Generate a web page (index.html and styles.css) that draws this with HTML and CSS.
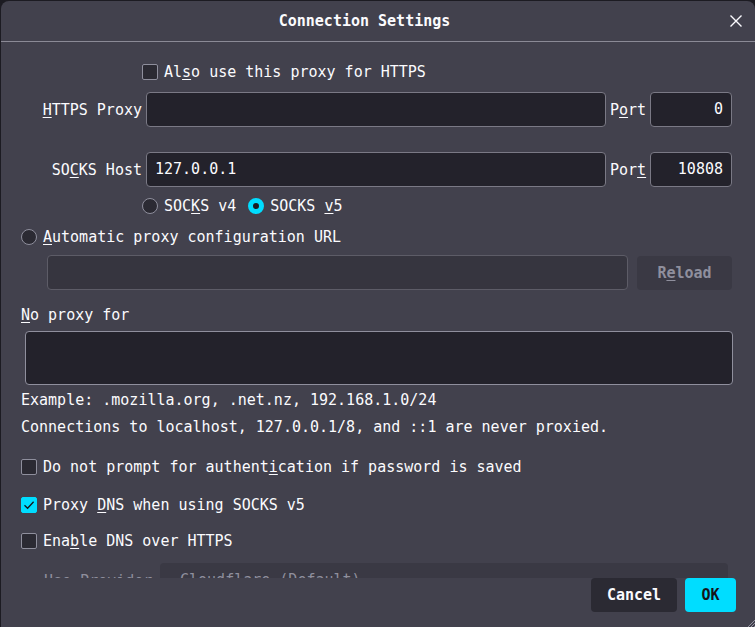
FILE: index.html
```html
<!DOCTYPE html>
<html>
<head>
<meta charset="utf-8">
<link rel="stylesheet" href="styles.css">
</head>
<body>
<div class="dialog">
  <div class="header">
    <span class="title">Connection Settings</span>
    <svg class="close" width="14" height="14" viewBox="0 0 14 14"><path d="M1.5 1.5 L12.5 12.5 M12.5 1.5 L1.5 12.5" stroke="#fbfbfe" stroke-width="1.4" fill="none"/></svg>
  </div>
  <div class="content">
    <div class="row-check indent r-also"><span class="box"></span><span>Al<u>s</u>o use this proxy for HTTPS</span></div>
    <div class="field-row r-https">
      <label class="lbl"><u>H</u>TTPS Proxy</label>
      <div class="input wide"></div>
      <label class="port">P<u>o</u>rt</label>
      <div class="input portin">0</div>
    </div>
    <div class="field-row r-socks">
      <label class="lbl">SO<u>C</u>KS Host</label>
      <div class="input wide">127.0.0.1</div>
      <label class="port">Por<u>t</u></label>
      <div class="input portin">10808</div>
    </div>
    <div class="row-check indent r-radios">
      <span class="radio"></span><span>SOC<u>K</u>S v4</span>
      <span class="radio on second"></span><span>SOCKS <u>v</u>5</span>
    </div>
    <div class="row-check r-auto"><span class="radio"></span><span><u>A</u>utomatic proxy configuration URL</span></div>
    <div class="pac-row">
      <div class="input disabled"></div>
      <div class="reload">R<u>e</u>load</div>
    </div>
    <div class="text r-noproxy"><u>N</u>o proxy for</div>
    <div class="textarea"></div>
    <div class="text r-example">Example: .mozilla.org, .net.nz, 192.168.1.0/24</div>
    <div class="text r-conn">Connections to localhost, 127.0.0.1/8, and ::1 are never proxied.</div>
    <div class="row-check r-prompt"><span class="box"></span><span>Do not prompt for authent<u>i</u>cation if password is saved</span></div>
    <div class="row-check r-dns"><span class="box checked"><svg width="16" height="16" viewBox="0 0 16 16"><path d="M3.5 8.2 L6.6 11.2 L12.6 4.8" stroke="#15141a" stroke-width="1.3" fill="none"/></svg></span><span>Proxy <u>D</u>NS when using SOCKS v5</span></div>
    <div class="row-check r-doh"><span class="box"></span><span>Ena<u>b</u>le DNS over HTTPS</span></div>
    <div class="provider-row">
      <span class="provider-lbl">Use Provider</span>
      <div class="select">Cloudflare (Default)</div>
    </div>
  </div>
  <div class="footer">
    <div class="btn cancel">Cancel</div>
    <div class="btn ok">OK</div>
  </div>
  <svg class="grip" width="8" height="8" viewBox="0 0 8 8"><path d="M8 1 L1 8 M8 4 L4 8 M8 7 L7 8" stroke="#8f8f9d" stroke-width="1"/></svg>
</div>
</body>
</html>
```
FILE: styles.css
```css
html, body {
  margin: 0;
  padding: 0;
  background: #1c1b22;
  width: 755px;
  height: 627px;
  overflow: hidden;
}
body {
  font-family: "DejaVu Sans Mono", monospace;
  font-size: 15px;
  color: #fbfbfe;
}
u {
  text-decoration: underline;
  text-underline-offset: 2px;
  text-decoration-thickness: 1px;
}
.dialog {
  position: relative;
  margin: 1px 0 0 1px;
  width: 754px;
  height: 626px;
  background: #42414d;
  border-radius: 8px 8px 0 0;
  display: flex;
  flex-direction: column;
}
.header {
  height: 40px;
  border-bottom: 1px solid #8b8a96;
  display: flex;
  align-items: center;
  justify-content: center;
  position: relative;
  flex: none;
}
.title {
  font-weight: bold;
  margin-left: -27px;
}
.close {
  position: absolute;
  left: 728px;
  top: 13px;
}
.content {
  height: 536px;
  overflow: hidden;
  flex: none;
  padding: 0 22px 0 19px;
  box-sizing: border-box;
}
.row-check {
  display: flex;
  align-items: center;
  height: 20px;
  line-height: 20px;
  padding-left: 1px;
}
.row-check.indent { padding-left: 122px; }
.box {
  width: 16px;
  height: 16px;
  box-sizing: border-box;
  border: 1px solid #8f8f9d;
  border-radius: 2px;
  background: #2b2a33;
  margin-right: 6px;
  flex: none;
}
.box.checked {
  background: #00ddff;
  border-color: #00ddff;
  position: relative;
}
.box.checked svg {
  position: absolute;
  left: -1px;
  top: -1px;
}
.radio {
  width: 16px;
  height: 16px;
  box-sizing: border-box;
  border: 1px solid #8f8f9d;
  border-radius: 50%;
  background: #2b2a33;
  margin-right: 6px;
  flex: none;
}
.radio.on {
  border: 5px solid #00ddff;
  background: #1c1b22;
}
.radio.second { margin-left: 12px; }
.r-also { margin-top: 20px; }
.field-row {
  display: flex;
  align-items: center;
  height: 35px;
}
.r-https { margin-top: 10px; }
.r-socks { margin-top: 25px; }
.lbl {
  width: 122px;
  text-align: right;
  margin-right: 4px;
  flex: none;
}
.input {
  height: 35px;
  box-sizing: border-box;
  border: 1px solid #7a7985;
  border-radius: 4px;
  background: #23222b;
  line-height: 33px;
  padding: 0 8px;
  flex: none;
}
.wide { width: 460px; }
.port {
  margin-left: 4px;
  width: 36px;
  margin-right: 4px;
  flex: none;
}
.portin {
  width: 82px;
  text-align: right;
}
.r-radios { margin-top: 9px; }
.r-auto { margin-top: 11px; }
.pac-row {
  display: flex;
  align-items: center;
  margin-top: 8px;
  padding-left: 27px;
  height: 35px;
}
.input.disabled {
  width: 581px;
  background: #36353f;
  border-color: #5d5c67;
}
.reload {
  margin-left: 9px;
  width: 95px;
  height: 34px;
  border-radius: 4px;
  background: #3a3944;
  color: #8f8f9d;
  font-weight: bold;
  text-align: center;
  line-height: 34px;
  flex: none;
}
.text {
  height: 20px;
  line-height: 20px;
  padding-left: 1px;
}
.r-noproxy { margin-top: 15px; }
.textarea {
  margin-top: 6px;
  margin-left: 5px;
  width: 708px;
  height: 54px;
  box-sizing: border-box;
  border: 1px solid #8f8f9d;
  border-radius: 4px;
  background: #23222b;
}
.r-example { margin-top: 5px; }
.r-conn { margin-top: 7px; }
.r-prompt { margin-top: 20px; }
.r-dns { margin-top: 18px; }
.r-doh { margin-top: 16px; }
.provider-row {
  display: flex;
  align-items: center;
  margin-top: 12px;
  height: 35px;
  padding-left: 24px;
  color: #8f8f9d;
}
.provider-lbl {
  width: 116px;
  margin-right: 0;
  flex: none;
}
.select {
  width: 568px;
  height: 35px;
  line-height: 35px;
  background: #3a3944;
  border-radius: 4px;
  padding-left: 20px;
  box-sizing: border-box;
  flex: none;
}
.footer {
  display: flex;
  justify-content: flex-end;
  padding-right: 19px;
  gap: 8px;
  flex: none;
}
.btn {
  height: 34px;
  line-height: 34px;
  border-radius: 4px;
  font-weight: bold;
  text-align: center;
}
.cancel {
  width: 86px;
  background: #2b2a33;
}
.ok {
  width: 51px;
  background: #00ddff;
  color: #15141a;
}
.grip {
  position: absolute;
  right: 0;
  bottom: 0;
}
```
